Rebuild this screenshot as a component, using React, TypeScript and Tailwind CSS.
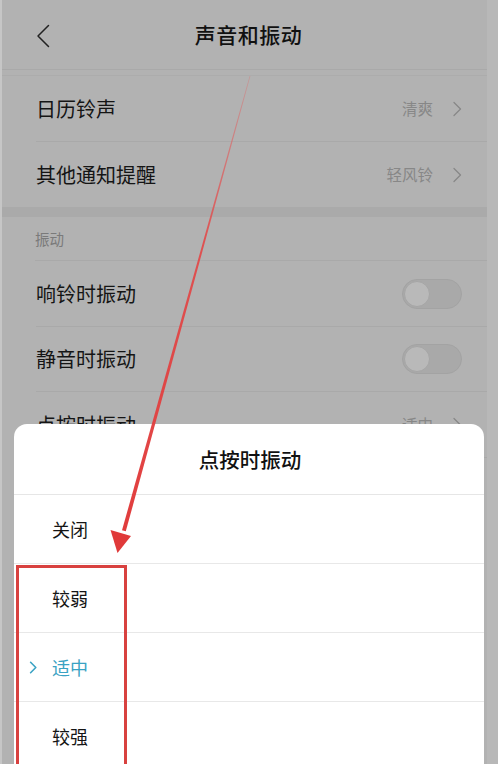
import React from 'react';

const font = { fontFamily: '"Noto Sans CJK SC", "Noto Sans", sans-serif' };

function Chevron({ className = '', width = 1.3 }: { className?: string; width?: number }) {
  return (
    <svg viewBox="0 0 10 16" className={className} fill="none" stroke="currentColor" strokeWidth={width} strokeLinecap="round" strokeLinejoin="round">
      <path d="M2 1.5 L8.5 8 L2 14.5" />
    </svg>
  );
}

function Toggle() {
  return (
    <div className="w-[60px] h-[30px] rounded-full bg-[#a9a9a9] border border-[#a3a3a3] flex items-center px-[1px]">
      <div className="w-[26px] h-[26px] rounded-full bg-[#b9b9b9] border border-[#a6a6a6]" />
    </div>
  );
}

function Row({ label, value, right, h, divider = true }: { label: string; value?: string; right?: React.ReactNode; h: string; divider?: boolean }) {
  return (
    <div className={`flex items-center pl-[34px] ${h}`}>
      <div className={`flex items-center flex-1 h-full pr-[25px] ${divider ? 'border-b border-[#a9a9a9]' : ''}`}>
        <span className="flex-1 text-[20px] text-[#151515]">{label}</span>
        {value && (
          <div className="flex items-center gap-[19px] text-[#878787]">
            <span className="text-[15.5px]">{value}</span>
            <Chevron className="w-[10px] h-[16px]" />
          </div>
        )}
        {right}
      </div>
    </div>
  );
}

const options = ['关闭', '较弱', '适中', '较强'];

export default function App() {
  return (
    <div style={font} className="relative w-[498px] h-[764px] overflow-hidden bg-[#b2b2b2] flex">
      <div className="w-[2px] bg-[#c6c6c6]" />
      <div className="flex-1 flex flex-col">
        <div className="h-[70px] relative flex items-center justify-center border-b border-[#a9a9a9]">
          <svg viewBox="0 0 14 24" className="absolute left-[34px] top-[24px] w-[14px] h-[24px]" fill="none" stroke="#222" strokeWidth="1.5" strokeLinecap="round" strokeLinejoin="round">
            <path d="M12.5 1.5 L2 12 L12.5 22.5" />
          </svg>
          <span className="text-[21px] font-medium text-[#111] tracking-[0.5px] ml-[8px]">声音和振动</span>
        </div>
        <div className="h-[6px] border-b border-[#acacac]" />
        <Row label="日历铃声" value="清爽" h="h-[66px]" />
        <Row label="其他通知提醒" value="轻风铃" h="h-[65px]" divider={false} />
        <div className="h-[10px] bg-[#aaaaaa]" />
        <div className="h-[44px] pl-[33px]">
          <div className="h-full flex items-center border-b border-[#a9a9a9] text-[14.5px] text-[#7a7a7a]">振动</div>
        </div>
        <Row label="响铃时振动" h="h-[66px]" right={<Toggle />} />
        <Row label="静音时振动" h="h-[65px]" right={<Toggle />} />
        <Row label="点按时振动" value="适中" h="h-[66px]" />
      </div>
      <div className="w-[11px] bg-[#b8b8b8]" />

      <div className="absolute left-[14px] right-[14px] top-[424px] h-[360px] bg-white rounded-t-[13px] flex flex-col">
        <div className="h-[71px] flex items-center justify-center border-b border-[#e6e6e6]">
          <span className="text-[20.5px] text-[#111] font-medium ml-[2px]">点按时振动</span>
        </div>
        {options.map((o) => {
          const active = o === '适中';
          return (
            <div key={o} className="h-[69px] flex items-center border-b border-[#e8e8e8] relative">
              {active && <Chevron width={2} className="absolute left-[15px] w-[8px] h-[13px] text-[#3ba3c4]" />}
              <span className={`pl-[38px] text-[18px] ${active ? 'text-[#3aa2c3]' : 'text-[#151515]'}`}>{o}</span>
            </div>
          );
        })}
      </div>

      <div className="absolute left-[16px] top-[565px] w-[111px] h-[215px] border-[3px] border-[#d8413f]" />

      <svg className="absolute inset-0 w-[498px] h-[764px] pointer-events-none" viewBox="0 0 498 764">
        <defs>
          <linearGradient id="ar" x1="250" y1="76" x2="118" y2="552" gradientUnits="userSpaceOnUse">
            <stop offset="0" stopColor="#e85a5a" stopOpacity="0.3" />
            <stop offset="0.35" stopColor="#e34646" stopOpacity="0.9" />
            <stop offset="1" stopColor="#e03a3a" />
          </linearGradient>
        </defs>
        <polygon points="249.6,76 250.4,76 125.8,531.3 122,530.3" fill="url(#ar)" />
        <polygon points="117.5,553 110.5,530 131,536" fill="#e03a3a" />
      </svg>
    </div>
  );
}
